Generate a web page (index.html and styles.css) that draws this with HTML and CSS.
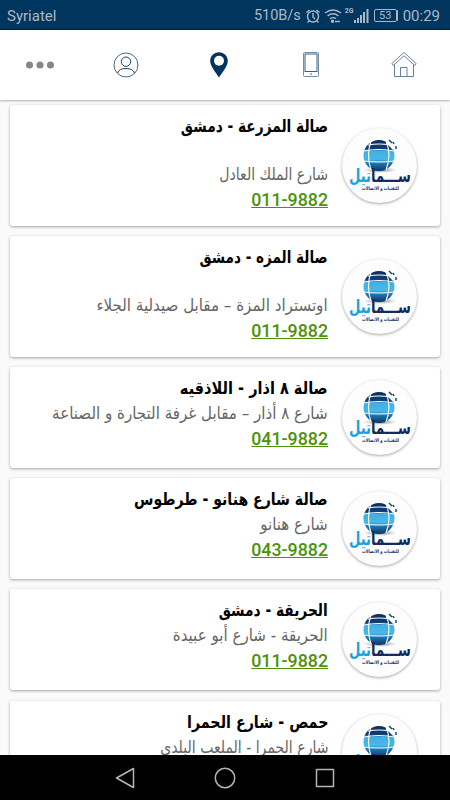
FILE: index.html
```html
<!DOCTYPE html>
<html lang="ar">
<head>
  <meta charset="utf-8">
  <title>Syriatel</title>
  <link rel="stylesheet" href="styles.css">
</head>
<body>
  <svg class="defs" width="0" height="0">
    <defs>
      <linearGradient id="globe" x1="0" y1="0" x2="0" y2="1">
        <stop offset="0" stop-color="#0b2d5e"/>
        <stop offset="0.28" stop-color="#0f3f75"/>
        <stop offset="0.36" stop-color="#3fb0e4"/>
        <stop offset="0.62" stop-color="#48b8e8"/>
        <stop offset="0.75" stop-color="#1c78b0"/>
        <stop offset="1" stop-color="#0b3566"/>
      </linearGradient>
      <radialGradient id="shade">
        <stop offset="0" stop-color="#333" stop-opacity="0.8"/>
        <stop offset="1" stop-color="#999" stop-opacity="0"/>
      </radialGradient>
      <symbol id="logo" viewBox="0 0 75 75">
        <ellipse cx="38" cy="42" rx="17" ry="3" fill="url(#shade)"/>
        <circle cx="37" cy="27.500" r="15.500" fill="url(#globe)"/>
        <path d="M22 23Q37 20 52 23M22 33Q37 35 52 33M29 13Q24 27 29 42M44 13Q50 27 44 42M26 17Q37 15 48 17" fill="none" stroke="#fff" stroke-width="1.100"/>
        <path d="M45 14l7 7" stroke="#fdfdfd" stroke-width="2.500"/>
        <path d="M47 12l3 3M51 14l1 2M54 18v3" stroke="#164678" stroke-width="1.500"/>
        <text x="69" y="54" direction="rtl" class="logo-name" textLength="62" lengthAdjust="spacingAndGlyphs"><tspan fill="#10295a">ســـما</tspan><tspan fill="#18a3e0">تيل</tspan></text>
        <text x="57" y="61.500" direction="rtl" class="logo-tag" textLength="37" lengthAdjust="spacingAndGlyphs">للتقنيات و الاتصالات</text>
      </symbol>
    </defs>
  </svg>

  <div class="screen">
    <div class="status-bar">
      <span class="carrier">Syriatel</span>
      <div class="status-icons">
        <span class="speed">510B/s</span>
        <svg class="alarm" width="16" height="16" viewBox="0 0 16 16">
          <circle cx="8" cy="8.500" r="5.500"/>
          <path d="M8 5v4l2 2M1.500 4.500L4.500 2M14.500 4.500L11.500 2M4 13l-1.500 1.500M12 13l1.500 1.500"/>
        </svg>
        <svg class="wifi" width="18" height="16" viewBox="0 0 18 16">
          <path d="M1 5Q9 -1 17 5M3.500 8Q9 3.500 14.500 8M6 10.800Q9 8.500 12 10.800"/>
          <circle cx="8.500" cy="13.200" r="1" fill="#a9b9ca"/>
          <path d="M11 13.500h5"/>
        </svg>
        <span class="network">2G</span>
        <svg class="signal" width="15" height="14" viewBox="0 0 15 14">
          <path d="M1 11v3M4 9v5M7 6v8M10 3v11M13.500 0v14"/>
        </svg>
        <span class="battery">53</span>
        <span class="clock">00:29</span>
      </div>
    </div>

    <div class="tab-bar">
      <svg class="more" width="28" height="28" viewBox="0 0 28 28">
        <g fill="#868686"><circle cx="3.500" cy="14" r="3.500"/><circle cx="14" cy="14" r="3.500"/><circle cx="24.500" cy="14" r="3.500"/></g>
      </svg>
      <svg width="28" height="28" viewBox="0 0 28 28" fill="none" stroke="#1d4264">
        <circle cx="14" cy="14" r="12" stroke-width="0.800"/>
        <circle cx="14" cy="10.700" r="4.700"/>
        <path d="M5.500 22Q7 17.500 14 17.500T22.500 22"/>
      </svg>
      <svg width="28" height="28" viewBox="0 0 28 28">
        <path d="M14 1.200C9 1.200 5.200 5 5.200 9.800C5.200 15 10 20.500 14 26.500C18 20.500 22.800 15 22.800 9.800C22.800 5 19 1.200 14 1.200Z" fill="#00355d"/>
        <circle cx="14" cy="9.800" r="5" fill="#fff"/>
      </svg>
      <svg width="28" height="28" viewBox="0 0 28 28" fill="none" stroke="#66809a" stroke-width="0.900">
        <rect x="6.500" y="1.500" width="15" height="24" rx="1"/>
        <rect x="8" y="3" width="12" height="17.500" stroke="#1d4f78"/>
        <circle cx="14.200" cy="23" r="0.600"/>
      </svg>
      <svg width="28" height="28" viewBox="0 0 28 28" fill="none" stroke="#56738f" stroke-width="0.900">
        <path d="M4.500 14v11.500h19V14"/>
        <path d="M1.800 12.500L14 1.500l12.200 11-1.500 2L14 4.800 3.300 14.500Z"/>
        <path d="M10.500 25.500v-9h6.500v9"/>
      </svg>
    </div>

    <div class="branches">
      <div class="card tall">
        <svg class="logo"><use href="#logo"/></svg>
        <div class="info">
          <div class="name">صالة المزرعة - دمشق</div>
          <div class="address">شارع الملك العادل</div>
          <a class="phone" dir="ltr">011-9882</a>
        </div>
      </div>
      <div class="card tall">
        <svg class="logo"><use href="#logo"/></svg>
        <div class="info">
          <div class="name">صالة المزه - دمشق</div>
          <div class="address">اوتستراد المزة – مقابل صيدلية الجلاء</div>
          <a class="phone" dir="ltr">011-9882</a>
        </div>
      </div>
      <div class="card">
        <svg class="logo"><use href="#logo"/></svg>
        <div class="info">
          <div class="name">صالة ٨ اذار - اللاذقيه</div>
          <div class="address">شارع ٨ أذار – مقابل غرفة التجارة و الصناعة</div>
          <a class="phone" dir="ltr">041-9882</a>
        </div>
      </div>
      <div class="card">
        <svg class="logo"><use href="#logo"/></svg>
        <div class="info">
          <div class="name">صالة شارع هنانو - طرطوس</div>
          <div class="address">شارع هنانو</div>
          <a class="phone" dir="ltr">043-9882</a>
        </div>
      </div>
      <div class="card">
        <svg class="logo"><use href="#logo"/></svg>
        <div class="info">
          <div class="name">الحريقة - دمشق</div>
          <div class="address">الحريقة - شارع أبو عبيدة</div>
          <a class="phone" dir="ltr">011-9882</a>
        </div>
      </div>
      <div class="card">
        <svg class="logo"><use href="#logo"/></svg>
        <div class="info">
          <div class="name">حمص - شارع الحمرا</div>
          <div class="address">شارع الحمرا - الملعب البلدي</div>
        </div>
      </div>
    </div>

    <div class="nav-bar">
      <svg width="22" height="22" viewBox="0 0 22 22"><path d="M19.500 1.500v19L2.500 11Z"/></svg>
      <svg width="22" height="22" viewBox="0 0 22 22"><circle cx="11" cy="11" r="9.700"/></svg>
      <svg width="22" height="22" viewBox="0 0 22 22"><rect x="2.500" y="2.500" width="17" height="17"/></svg>
    </div>
  </div>
</body>
</html>
```

FILE: styles.css
```css
body {
  margin: 0;
  font-family: Roboto, "DejaVu Sans", sans-serif;
}

.defs {
  display: block;
}

.screen {
  display: flex;
  flex-direction: column;
  width: 450px;
  height: 800px;
  overflow: hidden;
  background-color: #fafafa;
}

.status-bar {
  display: flex;
  justify-content: space-between;
  align-items: center;
  box-sizing: border-box;
  flex: none;
  height: 30px;
  padding: 2px 10px 0 7px;
  background-color: #00355d;
  border-bottom: 1px solid #001c3a;
  color: #a9b9ca;
  font-size: 14.5px;
}

.carrier {
  font-size: 15px;
}

.status-icons {
  display: flex;
  align-items: center;
}

.status-icons svg {
  fill: none;
  stroke: #a9b9ca;
  stroke-width: 1.4;
}

.alarm {
  margin-left: 4px;
}

.wifi {
  margin-left: 3px;
}

.network {
  align-self: flex-start;
  margin-left: 3px;
  font-size: 7px;
  font-weight: bold;
}

.status-icons .signal {
  stroke-width: 2;
}

.battery {
  box-sizing: border-box;
  width: 23px;
  height: 13px;
  margin: 0 6px 0 5px;
  border: 1px solid #a9b9ca;
  border-radius: 2px;
  box-shadow: 2px 0 0 -1px #a9b9ca;
  font-size: 11px;
  line-height: 11px;
  text-align: center;
}

.clock {
  font-size: 15px;
}

.tab-bar {
  display: flex;
  justify-content: flex-end;
  align-items: center;
  gap: 64.6px;
  box-sizing: border-box;
  flex: none;
  height: 70px;
  padding: 0 32px 0 0;
  background-color: #fff;
  box-shadow: 0 1px 2px rgba(0, 0, 0, 0.3);
}

.more {
  margin-right: -6px;
}

.branches {
  flex: 1;
  min-height: 0;
  padding: 5px 10px 0;
  overflow: hidden;
  direction: rtl;
}

.card {
  display: flex;
  align-items: center;
  box-sizing: border-box;
  height: 101px;
  margin-bottom: 10px;
  padding-right: 23px;
  background-color: #fff;
  border-radius: 3px;
  box-shadow: 0 1px 3px rgba(0, 0, 0, 0.35);
}

.card:last-child {
  margin-top: 11px;
}

.tall {
  height: 121px;
}

.logo {
  flex: none;
  width: 75px;
  height: 75px;
  border-radius: 50%;
  background-color: #fdfdfd;
  box-shadow: 0 1px 3px rgba(0, 0, 0, 0.35);
}

.logo-name {
  font-family: "DejaVu Sans", sans-serif;
  font-size: 18px;
  font-weight: bold;
}

.logo-tag {
  font-family: "DejaVu Sans", sans-serif;
  font-size: 5px;
  font-weight: bold;
  fill: #10295a;
}

.info {
  align-self: flex-start;
  margin-right: 14px;
  padding-top: 9px;
  white-space: nowrap;
}

/* Arabic lines are condensed towards their right edge */
.name,
.address {
  height: 25px;
  line-height: 25px;
  font-family: "DejaVu Sans", sans-serif;
  font-size: 17px;
  transform-origin: right;
}

.name {
  font-weight: bold;
  color: #000;
  transform: scaleX(0.809);
}

.address {
  color: #666;
  transform: scaleX(0.887);
}

.card:nth-child(2) .name {
  transform: scaleX(0.798);
}

.card:nth-child(3) .name {
  transform: scaleX(0.854);
}

.card:nth-child(4) .name {
  transform: scaleX(0.829);
}

.card:nth-child(6) .name {
  transform: scaleX(0.84);
}

.card:nth-child(1) .address,
.card:nth-child(6) .address {
  transform: scaleX(0.827);
}

.tall .address {
  margin-top: 23px;
}

.phone {
  display: block;
  line-height: 26px;
  font-size: 17.8px;
  font-weight: 500;
  color: #4b920a;
  text-align: right;
  text-decoration: underline;
}

.nav-bar {
  display: flex;
  justify-content: center;
  align-items: center;
  gap: 78px;
  flex: none;
  height: 45px;
  background-color: #000;
}

.nav-bar svg {
  fill: none;
  stroke: #b5b5b5;
  stroke-width: 1.5;
  stroke-linejoin: round;
}
```
